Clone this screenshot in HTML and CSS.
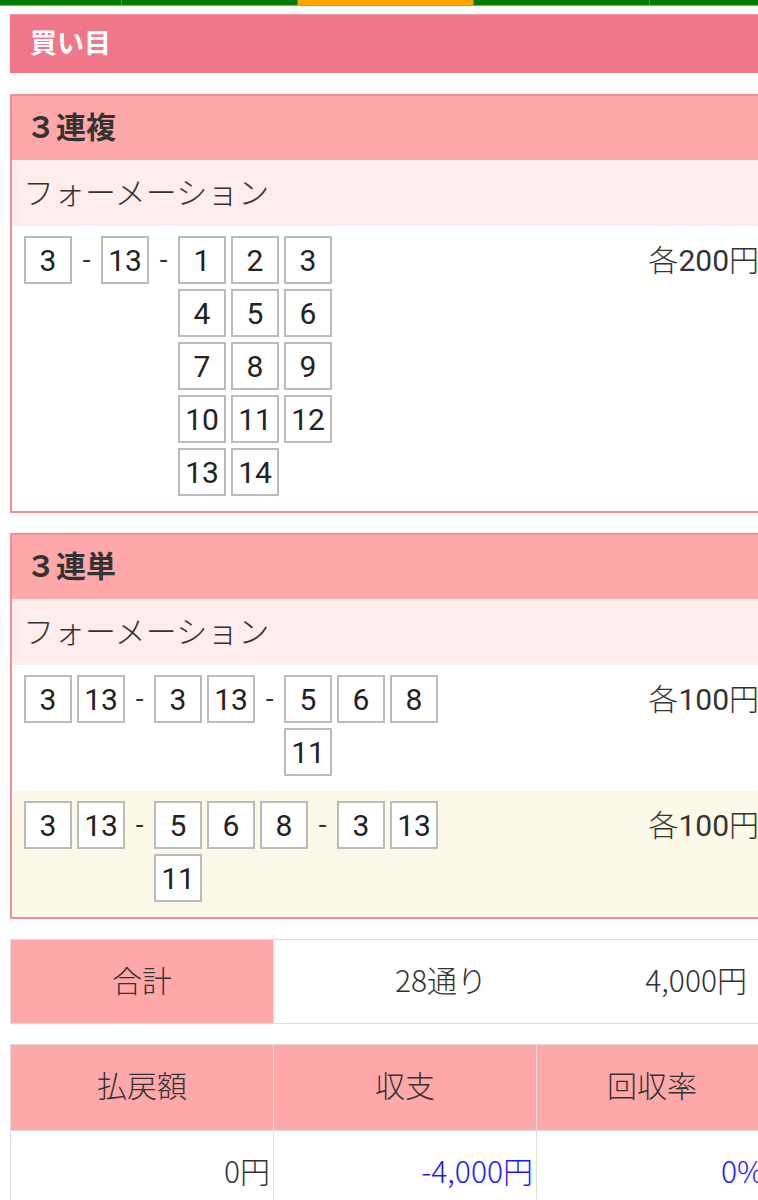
FILE: index.html
```html
<!DOCTYPE html>
<html lang="ja">
<head>
    <meta charset="UTF-8">
    <meta name="viewport" content="width=device-width, initial-scale=1.0">
    <title>買い目</title>
    <link rel="stylesheet" href="styles.css">
</head>
<body>
    <nav class="tabs">
        <span class="tab first"></span>
        <span class="tab"></span>
        <span class="tab active"></span>
        <span class="tab"></span>
        <span class="tab"></span>
    </nav>

    <main class="page">
        <h1 class="page-title">買い目</h1>

        <div class="bet">
            <h2 class="bet-type">３連複</h2>
            <div class="bet-method">フォーメーション</div>
            <div class="bet-row">
                <div class="picks">
                    <div class="group"><span class="num">3</span></div>
                    <span class="dash">-</span>
                    <div class="group"><span class="num">13</span></div>
                    <span class="dash">-</span>
                    <div class="group">
                        <span class="num">1</span><span class="num">2</span><span class="num">3</span>
                        <span class="num">4</span><span class="num">5</span><span class="num">6</span>
                        <span class="num">7</span><span class="num">8</span><span class="num">9</span>
                        <span class="num">10</span><span class="num">11</span><span class="num">12</span>
                        <span class="num">13</span><span class="num">14</span>
                    </div>
                </div>
                <div class="price"><span class="kanji">各</span>200<span class="kanji">円</span></div>
            </div>
        </div>

        <div class="bet">
            <h2 class="bet-type">３連単</h2>
            <div class="bet-method">フォーメーション</div>
            <div class="bet-row">
                <div class="picks">
                    <div class="group"><span class="num">3</span><span class="num">13</span></div>
                    <span class="dash">-</span>
                    <div class="group"><span class="num">3</span><span class="num">13</span></div>
                    <span class="dash">-</span>
                    <div class="group">
                        <span class="num">5</span><span class="num">6</span><span class="num">8</span>
                        <span class="num">11</span>
                    </div>
                </div>
                <div class="price"><span class="kanji">各</span>100<span class="kanji">円</span></div>
            </div>
            <div class="bet-row alt">
                <div class="picks">
                    <div class="group"><span class="num">3</span><span class="num">13</span></div>
                    <span class="dash">-</span>
                    <div class="group">
                        <span class="num">5</span><span class="num">6</span><span class="num">8</span>
                        <span class="num">11</span>
                    </div>
                    <span class="dash">-</span>
                    <div class="group"><span class="num">3</span><span class="num">13</span></div>
                </div>
                <div class="price"><span class="kanji">各</span>100<span class="kanji">円</span></div>
            </div>
        </div>

        <div class="total">
            <div class="total-label">合計</div>
            <div class="total-count">28通り</div>
            <div class="total-amount">4,000円</div>
        </div>

        <table class="result">
            <colgroup>
                <col class="col-a">
                <col class="col-b">
                <col>
            </colgroup>
            <tr>
                <th>払戻額</th>
                <th>収支</th>
                <th>回収率</th>
            </tr>
            <tr>
                <td>0円</td>
                <td class="minus">-4,000円</td>
                <td class="minus">0%</td>
            </tr>
        </table>
    </main>
</body>
</html>
```

FILE: styles.css
```css
html, body {
    overflow-x: hidden;
}

body {
    margin: 0;
    background: #fff;
    color: #333;
    font-family: "Noto Sans CJK JP", "Noto Sans", sans-serif;
    width: 758px;
}

/* top tab strip, only its bottom edge shows */
.tabs {
    display: flex;
    height: 5px;
    border-bottom: 1px solid #66c266;
    width: 900px;
}

.tab {
    width: 175px;
    background: #007a00;
    border-left: 1px solid #3f9a3f;
}

.tab.first {
    width: 121px;
    border-left: none;
}

.tab.active {
    background: #ffa500;
}

.page {
    width: 758px;
    padding: 8px 0 0 10px;
}

.page-title {
    margin: 0;
    height: 59px;
    display: flex;
    align-items: center;
    padding: 0 0 5px 20px;
    background: #f07789;
    border-top: 1px solid #f59aa8;
    box-sizing: border-box;
    color: #fff;
    font-size: 27px;
    font-weight: bold;
}

.bet {
    margin-top: 21px;
    border: 2px solid #f48b98;
    border-right: none;
}

.bet + .bet {
    margin-top: 20px;
}

.bet-type {
    margin: 0;
    height: 64px;
    box-sizing: border-box;
    display: flex;
    align-items: center;
    padding: 0 0 6px 14px;
    background: #fea8aa;
    font-size: 30px;
    font-weight: bold;
    color: #333;
}

.bet-method {
    height: 66px;
    box-sizing: border-box;
    display: flex;
    align-items: center;
    padding: 0 0 6px 11px;
    background: #ffeced;
    font-size: 31px;
    font-weight: 300;
    color: #333;
}

.bet-row {
    display: flex;
    align-items: flex-start;
    padding: 10px 9px 15px 12px;
}

.bet-row.alt {
    background: #fdf9e8;
}

.picks {
    display: flex;
    align-items: flex-start;
    gap: 5px;
}

.group {
    display: flex;
    flex-wrap: wrap;
    gap: 5px;
    max-width: 154px;
}

.num {
    width: 48px;
    height: 48px;
    box-sizing: border-box;
    border: 2px solid #bbb;
    background: #fff;
    display: flex;
    align-items: center;
    justify-content: center;
    font-family: Roboto, sans-serif;
    font-size: 30px;
    color: #222;
}

.dash {
    width: 19px;
    height: 48px;
    line-height: 48px;
    text-align: center;
    font-family: Roboto, sans-serif;
    font-size: 28px;
    color: #333;
}

.price {
    margin-left: auto;
    line-height: 44px;
    font-family: Roboto, sans-serif;
    font-size: 30px;
    color: #333;
}

.price .kanji {
    font-family: "Noto Sans CJK JP", sans-serif;
    font-weight: 300;
}

.total {
    margin-top: 20px;
    display: flex;
    height: 85px;
    border: 1px solid #ddd;
    box-sizing: border-box;
    font-size: 30px;
    font-weight: 300;
}

.total > div {
    display: flex;
    align-items: center;
    padding-bottom: 6px;
}

.total-label {
    width: 262px;
    justify-content: center;
    background: #fea8aa;
    border-right: 1px solid #ddd;
}

.total-count {
    width: 334px;
    justify-content: center;
}

.total-amount {
    flex: 1;
    justify-content: flex-end;
    padding-right: 20px;
}

.result {
    margin-top: 20px;
    width: 758px;
    table-layout: fixed;
    border-collapse: collapse;
    font-size: 30px;
    font-weight: 300;
}

.col-a,
.col-b {
    width: 263px;
}

.result th,
.result td {
    border: 1px solid #ddd;
    height: 78px;
    padding: 0 3px 7px;
}

.result th {
    background: #fea8aa;
    font-weight: 300;
    color: #333;
    text-align: center;
}

.result td {
    text-align: right;
    color: #333;
}

.result td.minus {
    color: #1a1aff;
}
```
